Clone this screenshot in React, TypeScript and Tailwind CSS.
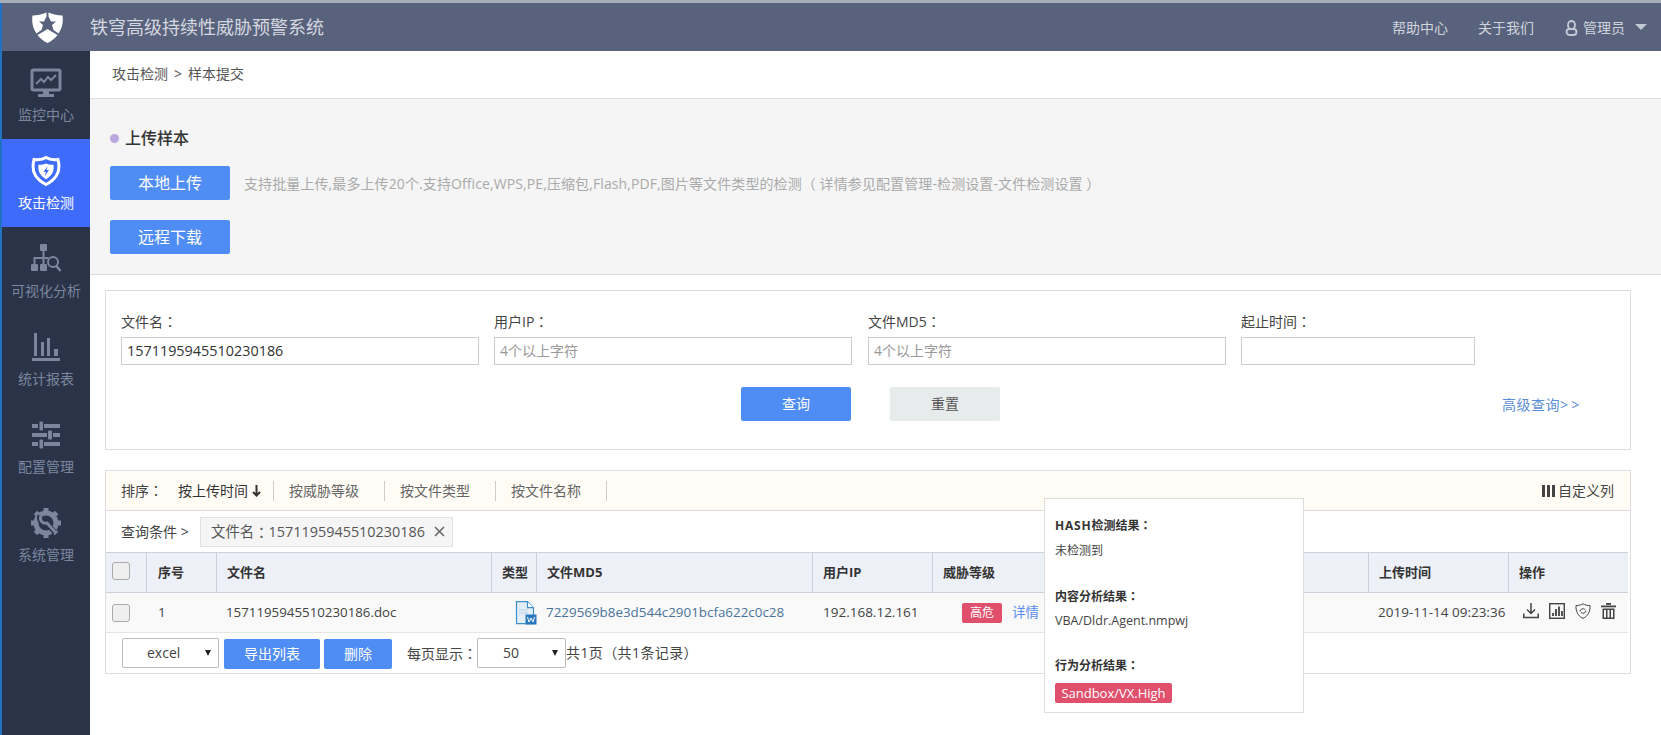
const FONT = "font-['Open_Sans','Noto_Sans_CJK_SC',sans-serif]";

const NAV = [
  { label: "监控中心", icon: <MonitorIcon /> },
  { label: "攻击检测", icon: <ShieldBoltIcon />, active: true },
  { label: "可视化分析", icon: <TreeSearchIcon /> },
  { label: "统计报表", icon: <BarsIcon /> },
  { label: "配置管理", icon: <SlidersIcon /> },
  { label: "系统管理", icon: <GearIcon /> },
];

const COLS = "grid grid-cols-[41px_70px_275px_45px_276px_120px_436px_140px_119px]";

function MonitorIcon() {
  return (
    <svg width="32" height="32" viewBox="0 0 32 32" fill="none">
      <rect x="2" y="3" width="28" height="20" rx="1.5" stroke="#7b869e" strokeWidth="3" />
      <path d="M6 17l5-5 3 3 4-5 3 3 5-5" stroke="#7b869e" strokeWidth="2" />
      <path d="M13 24h6v3h-6z M8 27h16v3H8z" fill="#7b869e" />
    </svg>
  );
}

function ShieldBoltIcon() {
  return (
    <svg width="32" height="32" viewBox="0 0 32 32" fill="none">
      <path d="M16 2.500c3 2 8 2.500 12 2 1.500 6 1 12-1.500 16-2.500 4-6.500 7-10.500 9-4-2-8-5-10.500-9C3 16.500 2.500 10.500 4 4.500c4 .5 9 0 12-2z" stroke="#fff" strokeWidth="3" />
      <path d="M16 8.500c2 1 4.500 1.500 7.500 1.300.5 3.500 0 6.700-1.500 9-1.500 2.300-3.500 4-6 5.500-2.500-1.500-4.500-3.200-6-5.500-1.500-2.300-2-5.500-1.500-9 3 .2 5.500-.3 7.500-1.300z" fill="#fff" />
      <path d="M17.500 11l-4 6h2.500l-1.500 4.500 4.500-6.500h-2.500z" fill="#3f6bfb" />
    </svg>
  );
}

function TreeSearchIcon() {
  return (
    <svg width="32" height="32" viewBox="0 0 32 32" fill="none">
      <rect x="10" y="1" width="7" height="7" rx="1" fill="#7b869e" />
      <rect x="1" y="21" width="7" height="7" rx="1" fill="#7b869e" />
      <rect x="10" y="21" width="7" height="7" rx="1" fill="#7b869e" />
      <path d="M13.500 8v13M4.500 21v-6h14" stroke="#7b869e" strokeWidth="2" />
      <circle cx="23" cy="19" r="5" stroke="#7b869e" strokeWidth="2" />
      <path d="M26.500 23l4 5" stroke="#7b869e" strokeWidth="2.500" />
    </svg>
  );
}

function BarsIcon() {
  return (
    <svg width="30" height="30" viewBox="0 0 30 30" fill="#7b869e">
      <rect x="3" y="1" width="3" height="23" />
      <rect x="10" y="10" width="3" height="14" />
      <rect x="16" y="6" width="3" height="18" />
      <rect x="23" y="17" width="4" height="7" />
      <rect x="1" y="26" width="28" height="3" />
    </svg>
  );
}

function SlidersIcon() {
  return (
    <svg width="30" height="30" viewBox="0 0 30 30" fill="#7b869e">
      <rect x="1" y="4" width="6" height="4" />
      <rect x="13" y="4" width="16" height="4" />
      <rect x="8.500" y="1.500" width="3.500" height="9" rx="1" />
      <rect x="1" y="13" width="15" height="4" />
      <rect x="22" y="13" width="7" height="4" />
      <rect x="17" y="10.500" width="4" height="9" rx="1" />
      <rect x="1" y="22" width="6" height="4" />
      <rect x="13" y="22" width="16" height="4" />
      <rect x="8.500" y="19.500" width="3.500" height="9" rx="1" />
    </svg>
  );
}

function GearIcon() {
  return (
    <svg width="32" height="32" viewBox="0 0 32 32" fill="none">
      <circle cx="16" cy="16" r="10" stroke="#7b869e" strokeWidth="5" />
      <path d="M16 1v6M16 25v6M1 16h6M25 16h6M5.400 5.400l4.200 4.200M22.400 22.400l4.200 4.200M5.400 26.600l4.200-4.200M22.400 9.600l4.200-4.200" stroke="#7b869e" strokeWidth="5" />
      <path d="M10 8.500a6 6 0 0 0 7 8l8 9" stroke="#2a3348" strokeWidth="5" />
      <path d="M11 9a5 5 0 0 0 6 7l9 10" stroke="#7b869e" strokeWidth="3" />
    </svg>
  );
}

function Logo() {
  return (
    <svg width="33" height="33" viewBox="0 0 33 33">
      <path d="M15.500 1.500C11 3.500 6 4.500 1.500 4.500c-1 7 .5 13 4 18l5-3.500 1.500-5-4-3.500h5l2.500-5zM17.500 1.500c4.500 2 9.500 3 14 3 1 7-.5 13-4 18l-5-3.500-1.500-5 4-3.500h-5l-2.500-5z" fill="#fff" />
      <path d="M6.500 24l6-3.500 4-2.500 4 2.500 6 3.500c-2.500 3.500-6 6-10 8-4-2-7.500-4.500-10-8z" fill="#fff" />
    </svg>
  );
}

function FileIcon() {
  return (
    <svg width="22" height="24" viewBox="0 0 22 24" fill="none">
      <path d="M1.500.7h11l6 6v16h-17z" fill="#e3eef8" stroke="#3f8fc9" strokeWidth="1.200" />
      <path d="M12.500.7v6h6" fill="#fff" stroke="#3f8fc9" strokeWidth="1.200" />
      <path d="M4 9h9M4 12h9" stroke="#bcd4e8" strokeWidth="1.200" />
      <rect x="10.500" y="13.500" width="11" height="10" fill="#2a78bd" />
      <path d="M12.500 16l1.500 5 2-4 2 4 1.500-5" stroke="#fff" strokeWidth="1" />
    </svg>
  );
}

function ActionIcons() {
  return (
    <div className="flex gap-[10px] pl-[14px] pt-[10px]">
      <svg width="16" height="16" viewBox="0 0 16 16" fill="none" stroke="#444" strokeWidth="1.500">
        <path d="M8 0v10M4 6.500l4 4 4-4" />
        <path d="M.8 10.500v4h14.400v-4" />
      </svg>
      <svg width="16" height="16" viewBox="0 0 16 16" fill="none">
        <rect x=".7" y=".7" width="14.600" height="14.600" stroke="#444" strokeWidth="1.400" />
        <path d="M4 10v3M7 6v7M10 3.500V13M13 8v5" stroke="#444" strokeWidth="1.800" />
      </svg>
      <svg width="16" height="16" viewBox="0 0 16 16" fill="none" stroke="#444" strokeWidth="1">
        <path d="M8 .8c2 1.200 4.500 1.800 7 1.800.3 6-2 10.500-7 12.800C3 13.100.7 8.600 1 2.600c2.500 0 5-.6 7-1.800z" />
        <path d="M5 8.500a3 3 0 0 1 5-2M11 7.500a3 3 0 0 1-5 2" />
      </svg>
      <svg width="15" height="16" viewBox="0 0 15 16" fill="#444">
        <rect x="0" y="2.500" width="15" height="1.800" />
        <rect x="5" y="0" width="5" height="1.800" />
        <path d="M1.500 5.500h12V16h-12zM3 7v7.500h2V7zM6.500 7v7.500h2V7zM10 7v7.500h2V7z" fillRule="evenodd" />
      </svg>
    </div>
  );
}

// the reference centres full-width colons, which the TC cut of the font does
function Colon() {
  return <span className="font-['Noto_Sans_CJK_TC',sans-serif]">：</span>;
}

function Field({ label, value, placeholder, col, input }: { label: string; value?: string; placeholder?: string; col: string; input: string }) {
  return (
    <div className={col}>
      <div className="h-[31px] text-[14px] leading-[30px] text-[#444]">
        {label}
        <Colon />
      </div>
      <div className={`${input} h-[28px] border border-[#ccc] bg-white px-[5px] leading-[26px] ${value ? "text-[14.400px] text-[#333]" : "text-[14px] text-[#999]"}`}>
        {value ?? placeholder}
      </div>
    </div>
  );
}

function Select({ value, width, pad }: { value: string; width: string; pad: string }) {
  return (
    <div className={`${width} ${pad} relative h-[30px] rounded-[2px] border border-[#bbb] bg-white text-[14px] leading-[28px] text-[#444]`}>
      {value}
      <span className="absolute right-[7px] top-[11px] h-0 w-0 border-x-[3.5px] border-t-[6px] border-x-transparent border-t-[#222]" />
    </div>
  );
}

function HeadCell({ children, pad }: { children: React.ReactNode; pad: string }) {
  return (
    <div className={`${pad} border-r border-[#ccd0d8] text-[13px] font-bold leading-[39px] text-[#333] last:border-r-0`}>
      {children}
    </div>
  );
}

export default function App() {
  return (
    <div className={`${FONT} flex h-[735px] w-[1661px] flex-col overflow-hidden bg-white`}>
      <div className="h-[3px] bg-[#a9aebb]" />
      <div className="flex min-h-0 flex-1">
        <div className="w-[2px] bg-[#2272c3]" />
        <div className="flex min-w-0 flex-1 flex-col">
          {/* top bar */}
          <header className="flex h-[48px] items-center bg-[#59627c]">
            <div className="flex w-[88px] justify-center pl-[2px]">
              <Logo />
            </div>
            <div className="text-[18px] text-[#d5d8e0]">铁穹高级持续性威胁预警系统</div>
            <div className="ml-auto flex items-center text-[14px] text-[#cfd3dc]">
              <span>帮助中心</span>
              <span className="ml-[30px]">关于我们</span>
              <svg className="ml-[31px]" width="13" height="17" viewBox="0 0 13 17" fill="none" stroke="#c4c9d6" strokeWidth="1.800">
                <path d="M3 6a3.500 4 0 1 1 7 0c0 3-1.500 4-3.500 4S3 9 3 6z" />
                <rect x="1.500" y="10" width="10" height="6" rx="3" />
              </svg>
              <span className="ml-[5px]">管理员</span>
              <span className="ml-[10px] mr-[14px] h-0 w-0 border-x-[6px] border-t-[6px] border-x-transparent border-t-[#c4c9d6]" />
            </div>
          </header>

          <div className="flex min-h-0 flex-1">
            {/* side nav */}
            <nav className="w-[88px] bg-[#2a3348]">
              {NAV.map((item) => (
                <div
                  key={item.label}
                  className={`flex h-[88px] flex-col items-center pt-[16px] text-[14px] ${item.active ? "bg-[#3f6bfb] text-white" : "text-[#7b869e]"}`}
                >
                  <div className="flex h-[32px] items-center justify-center">{item.icon}</div>
                  <div className="mt-[6px] whitespace-nowrap leading-[20px]">{item.label}</div>
                </div>
              ))}
            </nav>

            <main className="relative min-w-0 flex-1 bg-white">
              <div className="h-[48px] border-b border-[#ddd] pl-[22px] text-[14px] leading-[46px] text-[#555]">
                攻击检测<span className="mx-[6px]">&gt;</span>样本提交
              </div>

              <section className="h-[176px] border-b border-[#ddd] bg-[#f5f5f5] pl-[20px] pt-[27px]">
                <div className="flex h-[24px] items-center text-[16px] font-medium text-[#333]">
                  <span className="mr-[6px] h-[9px] w-[9px] rounded-full bg-[#bba7dc]" />
                  上传样本
                </div>
                <div className="mt-[16px] flex items-center">
                  <div className="h-[34px] w-[120px] rounded-[2px] bg-[#4f8df5] text-center text-[16px] leading-[34px] text-white">本地上传</div>
                  <div className="ml-[14px] text-[14px] tracking-[0.1px] text-[#aaa]">
                    支持批量上传,最多上传20个.支持Office,WPS,PE,压缩包,Flash,PDF,图片等文件类型的检测（ 详情参见配置管理-检测设置-文件检测设置 ）
                  </div>
                </div>
                <div className="mt-[20px] h-[34px] w-[120px] rounded-[2px] bg-[#4f8df5] text-center text-[16px] leading-[34px] text-white">远程下载</div>
              </section>

              {/* search form */}
              <section className="ml-[15px] mr-[30px] mt-[15px] h-[160px] border border-[#ddd] bg-white pl-[15px] pt-[15px]">
                <div className="flex">
                  <Field col="w-[373px]" input="w-[358px]" label="文件名" value="1571195945510230186" />
                  <Field col="w-[374px]" input="w-[358px]" label="用户IP" placeholder="4个以上字符" />
                  <Field col="w-[373px]" input="w-[358px]" label="文件MD5" placeholder="4个以上字符" />
                  <Field col="w-[234px]" input="w-[234px]" label="起止时间" />
                </div>
                <div className="mt-[22px] flex items-center">
                  <div className="ml-[620px] h-[34px] w-[110px] rounded-[2px] bg-[#4f8df5] text-center text-[14px] leading-[34px] text-white">查询</div>
                  <div className="ml-[39px] h-[34px] w-[110px] rounded-[2px] bg-[#e7ebeb] text-center text-[14px] leading-[34px] text-[#555]">重置</div>
                  <div className="ml-[502px] text-[14px] tracking-[0.5px] text-[#5b8fd9]">高级查询&gt;&thinsp;&gt;</div>
                </div>
              </section>

              {/* results */}
              <section className="ml-[15px] mr-[30px] mt-[20px] h-[204px] border border-[#ddd] bg-white">
                <div className="flex h-[40px] items-center border-b border-[#ddd] bg-[#fffcf5] pl-[15px] text-[14px]">
                  <span className="w-[57px] text-[#444]">
                    排序
                    <Colon />
                  </span>
                  <span className="flex w-[95px] items-center text-[#333]">
                    按上传时间
                    <svg className="ml-[4px]" width="9" height="12" viewBox="0 0 9 12" fill="none" stroke="#333" strokeWidth="2">
                      <path d="M4.500 0v10M1 7l3.500 3.500L8 7" />
                    </svg>
                  </span>
                  <span className="h-[20px] w-px bg-[#ccc]" />
                  <span className="ml-[15px] text-[#666]">按威胁等级</span>
                  <span className="ml-[25px] h-[20px] w-px bg-[#ccc]" />
                  <span className="ml-[15px] text-[#666]">按文件类型</span>
                  <span className="ml-[25px] h-[20px] w-px bg-[#ccc]" />
                  <span className="ml-[15px] text-[#666]">按文件名称</span>
                  <span className="ml-[25px] h-[20px] w-px bg-[#ccc]" />
                  <span className="ml-auto mr-[16px] flex items-center text-[#444]">
                    <span className="mr-[3px] flex gap-[2px]">
                      <i className="h-[12px] w-[3px] bg-[#444]" />
                      <i className="h-[12px] w-[3px] bg-[#444]" />
                      <i className="h-[12px] w-[3px] bg-[#444]" />
                    </span>
                    自定义列
                  </span>
                </div>

                <div className="flex h-[41px] items-center pl-[15px] text-[14px] text-[#444]">
                  <span className="w-[79px] whitespace-nowrap">查询条件 &gt;</span>
                  <span className="flex h-[30px] w-[253px] items-center border border-[#e2e2e2] bg-[#f5f5f5] pl-[10px] text-[14.400px] text-[#555]">
                    文件名
                    <Colon />
                    1571195945510230186
                    <svg className="ml-[9px]" width="11" height="11" viewBox="0 0 11 11" fill="none" stroke="#666" strokeWidth="1.500">
                      <path d="M1 1l9 9M10 1l-9 9" />
                    </svg>
                  </span>
                </div>

                <div className="mr-[2px] border-y border-[#ccd0d8] bg-[#edf0f7]">
                  <div className={`${COLS} h-[39px]`}>
                    <HeadCell pad="pl-[6px]">
                      <div className="mt-[9px] h-[18px] w-[18px] rounded-[3px] border border-[#aaa] bg-[#efefef]" />
                    </HeadCell>
                    <HeadCell pad="pl-[11px]">序号</HeadCell>
                    <HeadCell pad="pl-[10px]">文件名</HeadCell>
                    <HeadCell pad="pl-[10px]">类型</HeadCell>
                    <HeadCell pad="pl-[10px]">文件MD5</HeadCell>
                    <HeadCell pad="pl-[10px]">用户IP</HeadCell>
                    <HeadCell pad="pl-[10px]">威胁等级</HeadCell>
                    <HeadCell pad="pl-[10px]">上传时间</HeadCell>
                    <HeadCell pad="pl-[10px]">操作</HeadCell>
                  </div>
                </div>

                <div className={`${COLS} mr-[2px] h-[40px] items-center border-b border-[#e5e5e5] bg-[#f9f9f9] text-[13.500px] text-[#444]`}>
                  <div className="pl-[6px]">
                    <div className="h-[18px] w-[18px] rounded-[3px] border border-[#aaa] bg-[#efefef]" />
                  </div>
                  <div className="pl-[11px]">1</div>
                  <div className="pl-[9px] text-[13.300px]">1571195945510230186.doc</div>
                  <div className="pl-[23px]"><FileIcon /></div>
                  <div className="whitespace-nowrap pl-[9px] text-[13.400px] text-[#4a7399]">7229569b8e3d544c2901bcfa622c0c28</div>
                  <div className="pl-[10px]">192.168.12.161</div>
                  <div className="flex items-center pl-[29px]">
                    <span className="h-[20px] w-[40px] rounded-[2px] bg-[#e0506c] text-center text-[12px] leading-[20px] text-white">高危</span>
                    <span className="ml-[10px] text-[#5b8def]">详情</span>
                  </div>
                  <div className="whitespace-nowrap pl-[9px]">2019-11-14 09:23:36</div>
                  <div className="self-start"><ActionIcons /></div>
                </div>

                <div className="flex items-start pl-[16px] pt-[5px] text-[14px] text-[#444]">
                  <Select value="excel" width="w-[97px]" pad="pl-[24px]" />
                  <div className="ml-[5px] mt-[1px] h-[30px] w-[96px] rounded-[2px] bg-[#4f8df5] text-center leading-[30px] text-white">导出列表</div>
                  <div className="ml-[4px] mt-[1px] h-[30px] w-[68px] rounded-[2px] bg-[#4f8df5] text-center leading-[30px] text-white">删除</div>
                  <div className="ml-[15px] w-[70px] leading-[30px]">
                    每页显示
                    <Colon />
                  </div>
                  <Select value="50" width="w-[89px]" pad="pl-[25px]" />
                  <div className="leading-[30px] tracking-[0.4px]">共1页（共1条记录）</div>
                </div>
              </section>

              {/* threat details popover */}
              <div className="absolute left-[954px] top-[447px] h-[215px] w-[260px] border border-[#ddd] bg-white pl-[10px] pt-[16px] text-[12px] text-[#444]">
                <div className="h-[26px] font-bold leading-[20px] text-[#333]">
                  <span className="tracking-[0.8px]">HASH</span>检测结果<Colon />
                </div>
                <div className="h-[45px] leading-[20px]">未检测到</div>
                <div className="h-[25px] font-bold leading-[20px] text-[#333]">内容分析结果<Colon /></div>
                <div className="h-[44px] text-[12.500px] leading-[20px]">VBA/Dldr.Agent.nmpwj</div>
                <div className="h-[28px] font-bold leading-[20px] text-[#333]">行为分析结果<Colon /></div>
                <div className="h-[20px] w-[117px] rounded-[2px] bg-[#e0506c] text-center text-[13px] leading-[20px] text-white">Sandbox/VX.High</div>
              </div>
            </main>
          </div>
        </div>
      </div>
    </div>
  );
}
